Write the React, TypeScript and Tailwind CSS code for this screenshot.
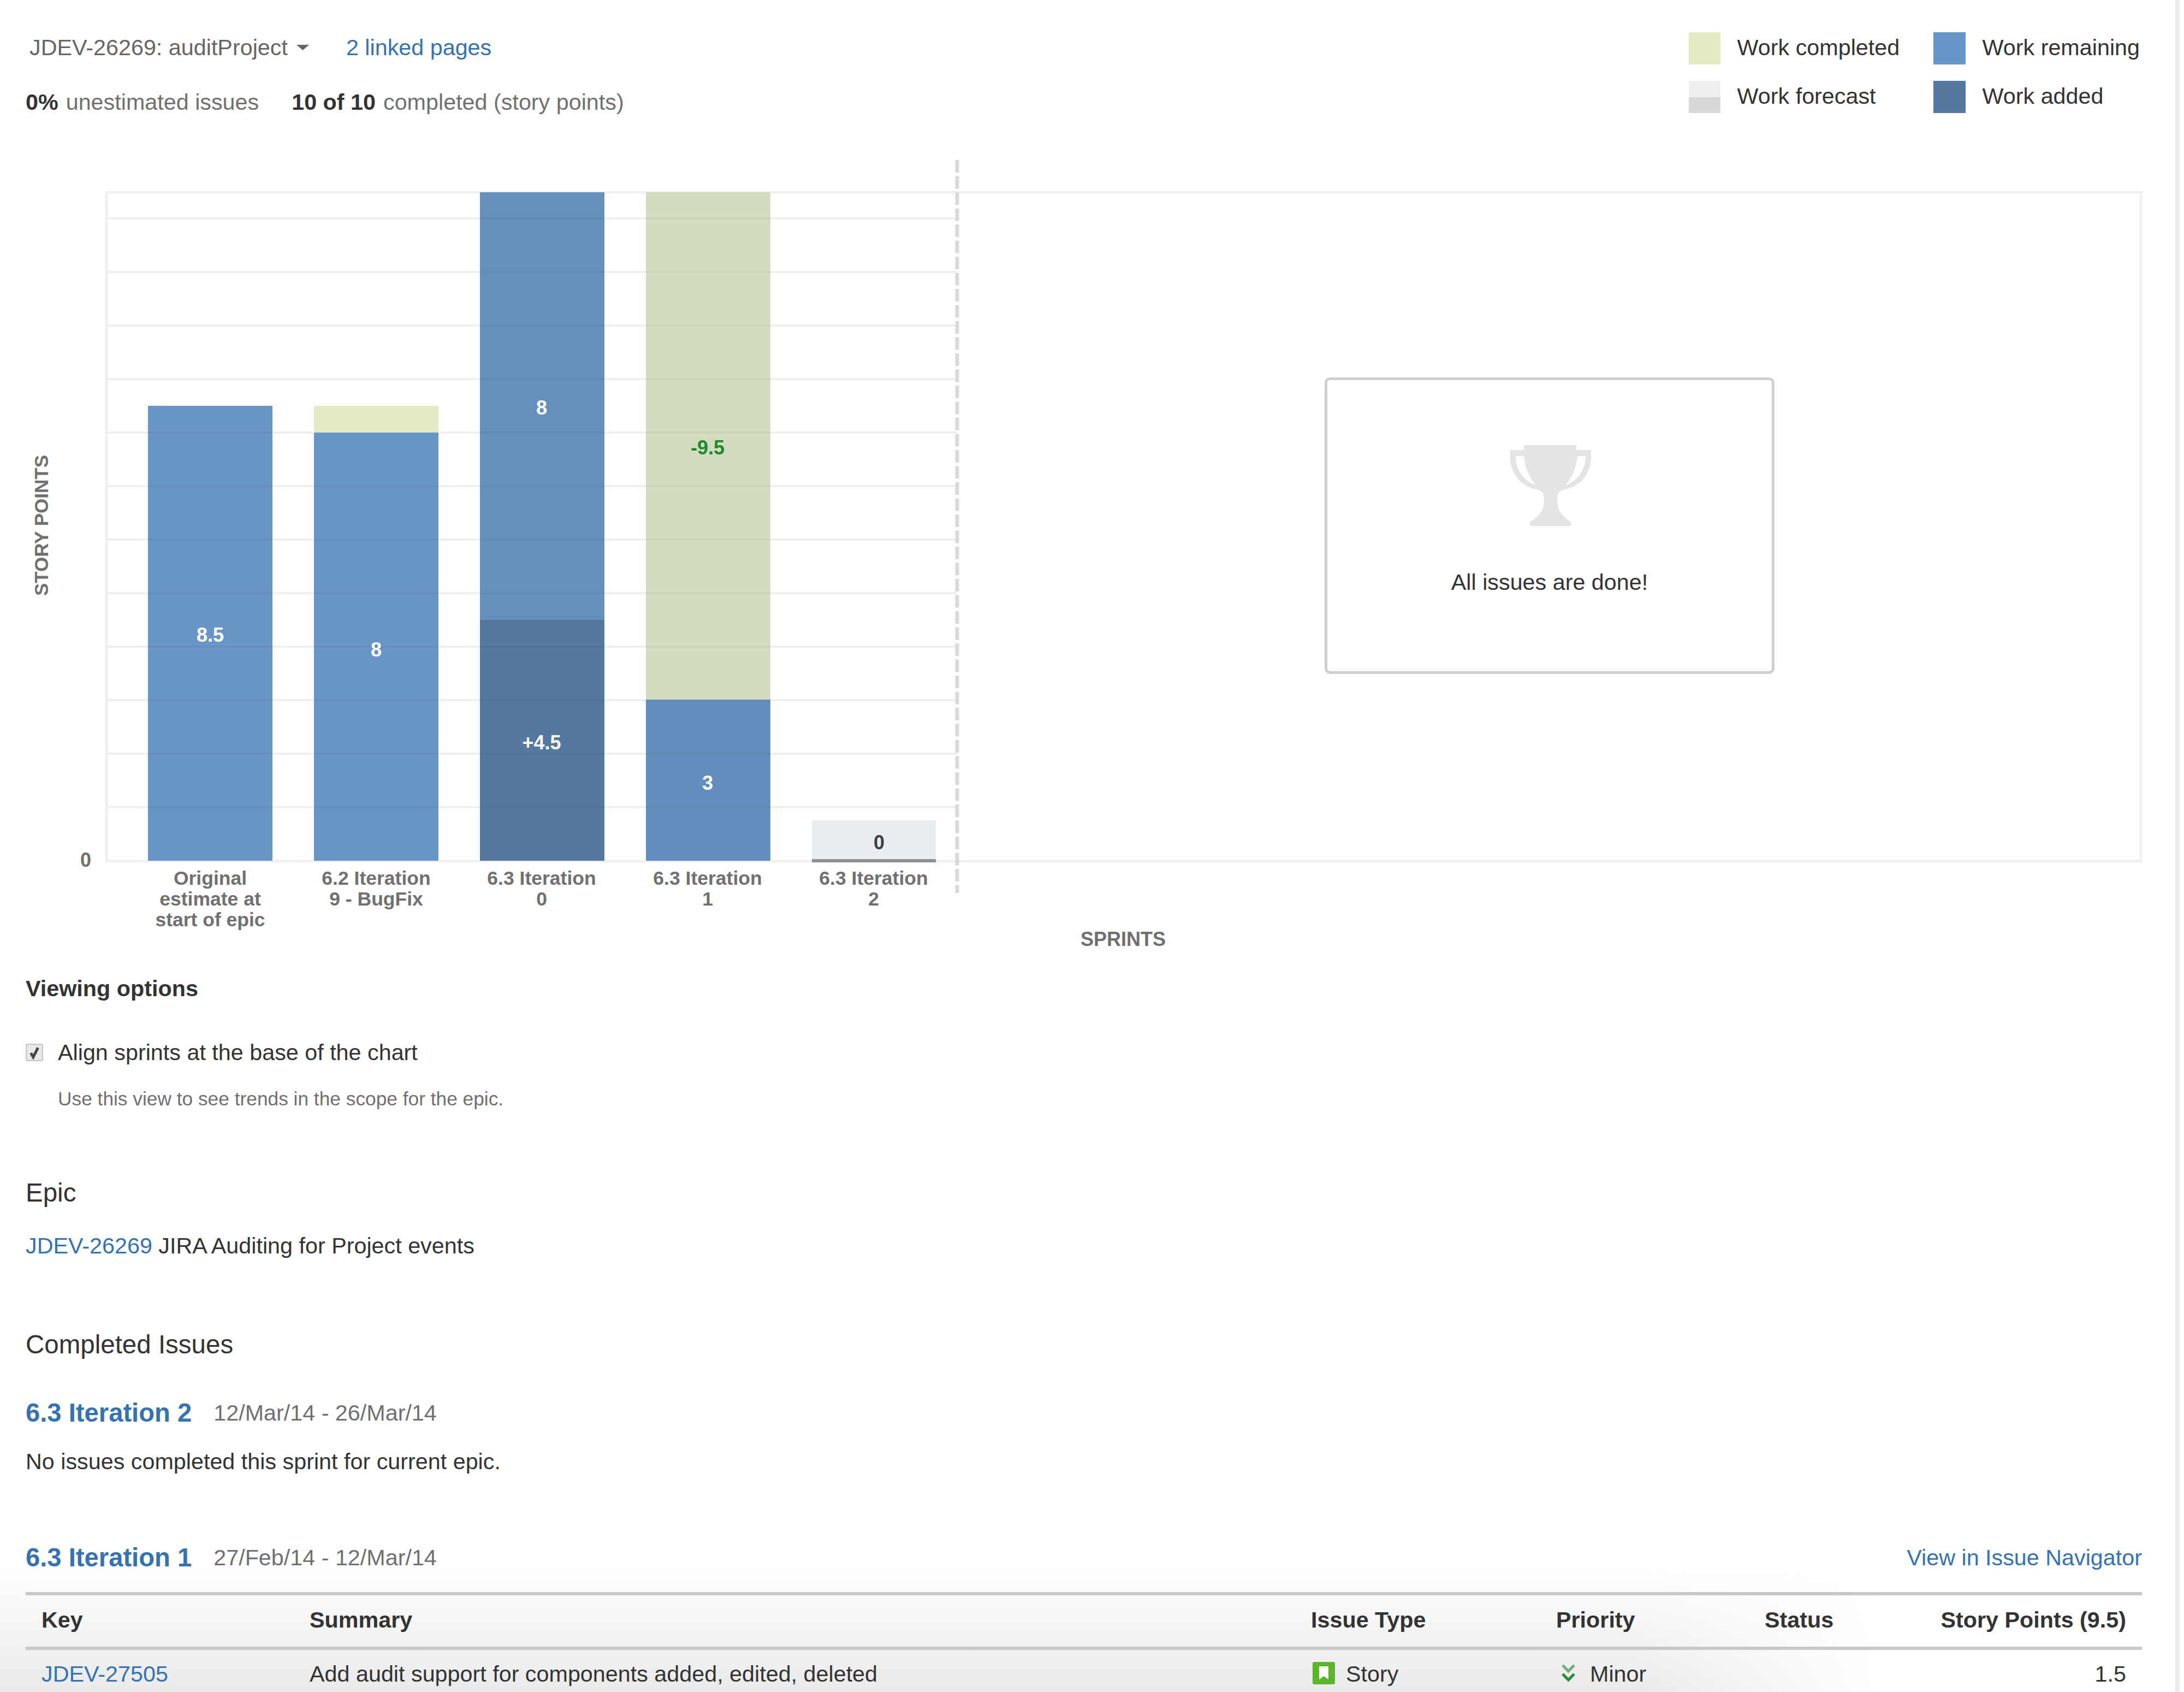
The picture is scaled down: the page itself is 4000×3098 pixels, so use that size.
import * as React from 'react';

const gridLines = [400, 498, 596, 694, 792, 890, 988, 1086, 1184, 1282, 1380, 1478];

type BarSegment = { x: number; y: number; h: number; fill: string };

const segments: BarSegment[] = [
  { x: 271, y: 743, h: 833, fill: '#6995c6' },
  { x: 575, y: 743, h: 49, fill: '#e1e9c5' },
  { x: 575, y: 792, h: 784, fill: '#6995c6' },
  { x: 879, y: 352, h: 783, fill: '#6590be' },
  { x: 879, y: 1135, h: 441, fill: '#55789e' },
  { x: 1183, y: 352, h: 929, fill: '#d3dcbd' },
  { x: 1183, y: 1281, h: 295, fill: '#648ebd' },
];

type BarLabel = { x: number; y: number; text: string; fill: string };

const barLabels: BarLabel[] = [
  { x: 385, y: 1175, text: '8.5', fill: '#ffffff' },
  { x: 689, y: 1202, text: '8', fill: '#ffffff' },
  { x: 992, y: 759, text: '8', fill: '#ffffff' },
  { x: 992, y: 1372, text: '+4.5', fill: '#ffffff' },
  { x: 1296, y: 832, text: '-9.5', fill: '#1a8a30' },
  { x: 1296, y: 1446, text: '3', fill: '#ffffff' },
  { x: 1610, y: 1555, text: '0', fill: '#3a4046' },
];

const sprintLabels: { x: number; lines: string[] }[] = [
  { x: 385, lines: ['Original', 'estimate at', 'start of epic'] },
  { x: 689, lines: ['6.2 Iteration', '9 - BugFix'] },
  { x: 992, lines: ['6.3 Iteration', '0'] },
  { x: 1296, lines: ['6.3 Iteration', '1'] },
  { x: 1600, lines: ['6.3 Iteration', '2'] },
];

/** The burnup chart; the svg sits at y=280 of the page, coordinates below are page coordinates. */
function ScopeChart() {
  return (
    <svg viewBox="0 280 4000 1480" className="block h-[1480px] w-[4000px]">
      <rect x="195" y="352" width="3726" height="1225" fill="none" stroke="#f0f0f0" strokeWidth="5" />
      {gridLines.map((y) => (
        <line key={y} x1="195" x2="1753" y1={y} y2={y} stroke="#f0f0f0" strokeWidth="4" />
      ))}
      {segments.map((s) => (
        <g key={`${s.x}-${s.y}`}>
          <rect x={s.x} y={s.y} width="228" height={s.h} fill={s.fill} />
          {/* grid shows faintly through the bars */}
          {gridLines
            .filter((y) => y > s.y && y < s.y + s.h)
            .map((y) => (
              <line key={y} x1={s.x} x2={s.x + 228} y1={y} y2={y} stroke="#000000" strokeOpacity="0.035" strokeWidth="4" />
            ))}
        </g>
      ))}
      <rect x="1487" y="1502" width="227" height="71" fill="#ebeef1" />
      <rect x="1487" y="1573" width="227" height="6" fill="#909090" />
      <line x1="1753" x2="1753" y1="293" y2="1635" stroke="#d9d9d9" strokeWidth="7" strokeDasharray="23 6.5" />
      {barLabels.map((l) => (
        <text key={`${l.x}-${l.y}`} x={l.x} y={l.y} textAnchor="middle" fontSize="36" fontWeight="700" fill={l.fill}>
          {l.text}
        </text>
      ))}
      <text x="157" y="1587" textAnchor="middle" fontSize="36" fontWeight="700" fill="#707070">
        0
      </text>
      {sprintLabels.map((label) =>
        label.lines.map((line, i) => (
          <text
            key={line + label.x}
            x={label.x}
            y={1620 + i * 38}
            textAnchor="middle"
            fontSize="35.5"
            fontWeight="700"
            fill="#707070"
          >
            {line}
          </text>
        )),
      )}
      <text
        transform="translate(88 962) rotate(-90)"
        textAnchor="middle"
        fontSize="35"
        fontWeight="700"
        fill="#707070"
      >
        STORY POINTS
      </text>
      <text x="2057" y="1732" textAnchor="middle" fontSize="36" fontWeight="700" fill="#707070">
        SPRINTS
      </text>
    </svg>
  );
}

function TrophyIcon() {
  return (
    <svg viewBox="0 0 148 148" className="ml-[3px] h-[148px] w-[148px]">
      <path
        fillRule="evenodd"
        fill="#e4e4e4"
        d="M25 0H121V9H148V22C148 52 128 78 96 82C90 84 86 90 86 100C86 118 94 130 110 140C112 142 112 148 110 148H38C35 148 35 142 37 140C54 130 62 118 62 100C62 90 58 84 52 82C20 78 0 52 0 22V9H25ZM10 20H25C27 42 35 60 47 73C25 66 10 46 10 20ZM138 20H123C121 42 113 60 101 73C123 66 138 46 138 20Z"
      />
    </svg>
  );
}

function LegendItem({ label, children }: { label: string; children: React.ReactNode }) {
  return (
    <div className="flex h-[59px] items-center gap-[31px]">
      {children}
      <span className="-mt-[4px] text-[41.3px] leading-[50px] text-[#333333]">{label}</span>
    </div>
  );
}

function Header() {
  return (
    <div className="flex h-[280px] justify-between pl-[47px] pr-[81px]">
      <div className="flex flex-col">
        <div className="mt-[62px] flex h-[50px] items-center">
          <span className="ml-[7px] text-[41.3px] leading-[50px] text-[#666666]">JDEV-26269: auditProject</span>
          <svg viewBox="0 0 23 10" className="ml-[16px] h-[10px] w-[23px]">
            <polygon points="0,0 23,0 11.5,10" fill="#666666" />
          </svg>
          <a className="ml-[68px] text-[41.3px] leading-[50px] text-[#3572b0]">2 linked pages</a>
        </div>
        <div className="mt-[50px] flex h-[50px] items-center text-[41.3px] leading-[50px] text-[#707070]">
          <b className="font-bold text-[#333333]">0%</b>
          <span className="ml-[14px]">unestimated issues</span>
          <b className="ml-[60px] font-bold text-[#333333]">10 of 10</b>
          <span className="ml-[14px]">completed (story points)</span>
        </div>
      </div>
      <div className="mt-[59px] grid h-[148px] grid-cols-[448px_auto] gap-y-[30px]">
        <LegendItem label="Work completed">
          <span className="h-[59px] w-[58px] bg-[#e2ebc4]" />
        </LegendItem>
        <LegendItem label="Work remaining">
          <span className="h-[59px] w-[59px] bg-[#6895c7]" />
        </LegendItem>
        <LegendItem label="Work forecast">
          <span className="flex h-[59px] w-[58px] flex-col">
            <span className="h-[30px] bg-[#efefef]" />
            <span className="h-[29px] bg-[#d8d8d8]" />
          </span>
        </LegendItem>
        <LegendItem label="Work added">
          <span className="h-[59px] w-[59px] bg-[#55789f]" />
        </LegendItem>
      </div>
    </div>
  );
}

function StoryIcon() {
  return (
    <svg viewBox="0 0 41 41" className="-mt-[3px] h-[41px] w-[41px]">
      <rect width="41" height="41" rx="3" fill="#5cb52c" />
      <path d="M12 8H29V32L20.5 26L12 32Z" fill="#ffffff" />
    </svg>
  );
}

function MinorIcon() {
  return (
    <svg viewBox="0 0 29 33" className="-mt-[4px] h-[33px] w-[29px]" fill="none" strokeWidth="5">
      <path d="M4 2L14.5 13L25 2" stroke="#6fb07f" />
      <path d="M4 18L14.5 29L25 18" stroke="#2b8a3a" />
    </svg>
  );
}

function IssuesTable() {
  const columns = 'grid grid-cols-[491px_1834px_449px_382px_1fr] items-center px-[29px]';
  return (
    <div className="mt-[33px] border-t-[6px] border-[#c8c8c8] text-[41.3px] leading-[50px]">
      <div className={`${columns} h-[100px] border-b-[6px] border-[#c8c8c8] pb-[5px] font-bold text-[#333333]`}>
        <span>Key</span>
        <span>Summary</span>
        <span>Issue Type</span>
        <span>Priority</span>
        <div className="flex justify-between">
          <span>Status</span>
          <span>Story Points (9.5)</span>
        </div>
      </div>
      <div className={`${columns} h-[92px] pb-[4px] text-[#333333]`}>
        <a className="text-[#3572b0]">JDEV-27505</a>
        <span>Add audit support for components added, edited, deleted</span>
        <div className="flex items-center gap-[20px] pl-[3px]">
          <StoryIcon />
          <span>Story</span>
        </div>
        <div className="flex items-center gap-[25px] pl-[8px]">
          <MinorIcon />
          <span>Minor</span>
        </div>
        <span className="text-right">1.5</span>
      </div>
    </div>
  );
}

export default function App() {
  return (
    <div className="relative h-[3098px] w-[4000px] overflow-hidden bg-white font-['Liberation_Sans',Arial,sans-serif] text-[#333333]">
      {/* window drop shadow fading in along the bottom, behind the content */}
      <div className="absolute inset-x-0 bottom-0 h-[230px] bg-[linear-gradient(to_bottom,rgba(230,230,230,0),rgba(230,230,230,0.85))] [mask-image:linear-gradient(to_right,black_75%,transparent_86%)]" />

      <div className="relative">
        <Header />

        <div className="relative">
          <ScopeChart />
          <div className="absolute left-[2426px] top-[411px] flex h-[543px] w-[824px] flex-col items-center rounded-[10px] border-[5px] border-[#cfcfcf] bg-white pt-[119px]">
            <TrophyIcon />
            <span className="mt-[78px] text-[41.3px] leading-[50px] text-[#333333]">All issues are done!</span>
          </div>
        </div>

        <div className="pl-[47px] pr-[77px]">
          <h4 className="mt-[25px] text-[41.3px] font-bold leading-[50px]">Viewing options</h4>
          <div className="mt-[67px] flex h-[50px] items-center">
            <span className="flex h-[32px] w-[32px] items-center justify-center rounded-[4px] border-2 border-[#c4c4c4] bg-[#e8e8e8]">
              <svg viewBox="0 0 24 24" className="h-[26px] w-[26px]" fill="none" stroke="#444444" strokeWidth="4.5">
                <path d="M6 13L10 20L18 4" />
              </svg>
            </span>
            <label className="ml-[27px] text-[41.3px] leading-[50px]">Align sprints at the base of the chart</label>
          </div>
          <p className="ml-[59px] mt-[35px] text-[35.3px] leading-[50px] text-[#707070]">
            Use this view to see trends in the scope for the epic.
          </p>

          <h3 className="mt-[117px] text-[47.5px] font-normal leading-[60px]">Epic</h3>
          <p className="mt-[42px] text-[41.3px] leading-[50px]">
            <a className="text-[#3572b0]">JDEV-26269</a> JIRA Auditing for Project events
          </p>

          <h3 className="mt-[126px] text-[47.5px] font-normal leading-[60px]">Completed Issues</h3>

          <div className="mt-[65px] flex h-[60px] items-center">
            <a className="text-[47.2px] font-bold leading-[60px] text-[#3572b0]">6.3 Iteration 2</a>
            <span className="ml-[40px] text-[41.3px] leading-[50px] text-[#707070]">12/Mar/14 - 26/Mar/14</span>
          </div>
          <p className="mt-[34px] text-[41.3px] leading-[50px]">No issues completed this sprint for current epic.</p>

          <div className="mt-[121px] flex h-[60px] items-center justify-between">
            <div className="flex items-center">
              <a className="text-[47.2px] font-bold leading-[60px] text-[#3572b0]">6.3 Iteration 1</a>
              <span className="ml-[40px] text-[41.3px] leading-[50px] text-[#707070]">27/Feb/14 - 12/Mar/14</span>
            </div>
            <a className="text-[41.3px] leading-[50px] text-[#3572b0]">View in Issue Navigator</a>
          </div>

          <IssuesTable />
        </div>
      </div>

      {/* window edge on the right */}
      <div className="absolute inset-y-0 right-0 w-[16px] border-l-[8px] border-[#ececec]" />
    </div>
  );
}
